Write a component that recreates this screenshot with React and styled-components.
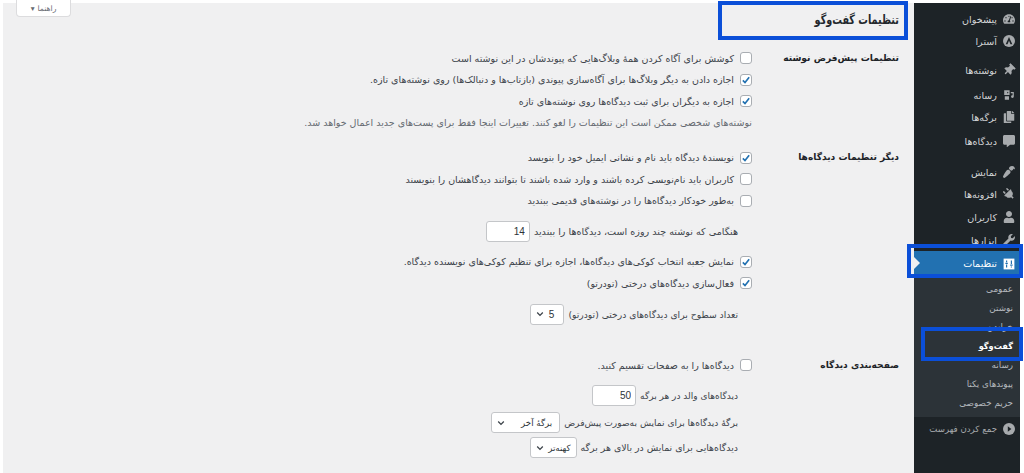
import React from "react";
import styled, { createGlobalStyle } from "styled-components";
import { FaTachometerAlt, FaThumbtack, FaCopy, FaCommentAlt, FaPaintBrush, FaPlug, FaUser, FaWrench } from "react-icons/fa";

const Global = createGlobalStyle`
  html, body { margin: 0; padding: 0; background: #fff; height: 473px; overflow: hidden; }
  #root { height: 473px; }
  * { box-sizing: border-box; }
`;
const FONT = `"DejaVu Sans", "Noto Sans", Tahoma, sans-serif`;

const Page = styled.div`
  display: flex; direction: rtl; height: 473px; padding: 3px 4px 0 3px;
  font-family: ${FONT}; font-size: 9.5px; color: #3c434a;
`;
const Sidebar = styled.nav`
  width: 106px; flex: none; background: #1d2327; display: flex; flex-direction: column;
`;
const MenuItem = styled.div`
  display: flex; align-items: center; gap: 6px; height: ${p => p.$h || 22}px; padding-right: 5px; flex: none;
  margin-top: ${p => p.$mt || 0}px;
  color: ${p => (p.$active ? "#fff" : p.$dim ? "#a7aaad" : "#d5d7d9")};
  font-size: ${p => (p.$dim ? 8.6 : 9.6)}px; white-space: nowrap;
  background: ${p => (p.$active ? "#2271b1" : "transparent")}; position: relative;
  svg { color: ${p => (p.$active ? "#fff" : "#a7aaad")}; flex: none; width: 12px; height: 12px; }
`;
const Notch = styled.span`
  position: absolute; left: 0; top: 6px; border: 6px solid transparent; border-left-color: #f0f0f1; border-right-width: 0;
`;
const Sub = styled.div`
  background: #2c3338; padding: 3.5px 0 4.5px; display: flex; flex-direction: column; flex: none;
`;
const SubItem = styled.div`
  height: 19px; line-height: 19px; padding-right: 7px; white-space: nowrap;
  font-size: ${p => (p.$current ? 8.2 : 8.8)}px;
  color: ${p => (p.$current ? "#fff" : "#b4b9be")}; font-weight: ${p => (p.$current ? 700 : 400)};
`;
const Pin = styled(FaThumbtack)`transform: rotate(45deg);`;
const Brush = styled(FaPaintBrush)`transform: rotate(180deg);`;
const Plug = styled(FaPlug)`transform: rotate(-45deg);`;

const Main = styled.main`
  flex: 1; background: #f0f0f1; padding: 0 15px 0 13px; min-width: 0; display: flex; flex-direction: column;
`;
const Head = styled.header`
  display: flex; justify-content: space-between; align-items: flex-start; height: 40px; flex: none;
`;
const Title = styled.h1`
  margin: 7px 0 0; font-size: 13px; font-weight: 700; color: #23282d; line-height: 20px;
  transform: scaleX(0.74); transform-origin: right center; white-space: nowrap;
`;
const Help = styled.button`
  margin: -3px 0 0; height: 17px; width: 55px; background: #fff; border: 1px solid #dcdcde; border-top: 0;
  border-radius: 0 0 4px 4px; font: 7.6px ${FONT}; color: #646970; display: flex; align-items: center;
  justify-content: center; gap: 3px; padding: 0;
`;
const Section = styled.section`
  display: grid; grid-template-columns: 147px 1fr; margin-top: ${p => p.$mt || 0}px;
`;
const Th = styled.h2`
  margin: 0; font-size: 9.1px; font-weight: 700; color: #1d2327; line-height: 21.5px; white-space: nowrap;
`;
const Fields = styled.div`display: flex; flex-direction: column;`;
const CheckLine = styled.label`
  display: flex; align-items: center; gap: 6px; height: 21.5px; white-space: nowrap;
  margin-top: ${p => p.$mt || 0}px;
`;
const FieldLine = styled.div`
  display: flex; align-items: center; gap: 4px; height: 21px; white-space: nowrap; font-size: ${p => p.$size || 9}px;
  padding-right: 14px; margin-top: ${p => p.$mt || 0}px;
`;
const Box = styled.span`
  width: 12px; height: 12px; flex: none; background: #fff; border: 1px solid #a9adb2; border-radius: 3px;
  display: flex; align-items: center; justify-content: center;
  svg { width: 10px; height: 10px; }
`;
const Note = styled.p`
  margin: 0; height: 21px; line-height: 21px; color: #646970; font-size: 9.5px; white-space: nowrap;
`;
const NumberBox = styled.input`
  width: 44px; height: 21px; border: 1px solid #c4c6c9; border-radius: 3px; background: #fff; color: #2c3338;
  font: 10px "Liberation Sans", sans-serif; direction: ltr; text-align: right; padding: 0 4px;
  margin: 0; outline: 0;
`;
const SelectBox = styled.div`
  width: ${p => p.$w}px; height: 21px; border: 1px solid #c4c6c9; border-radius: 3px; background: #fff; color: #2c3338;
  display: flex; align-items: center; justify-content: space-between; padding: 0 ${p => p.$pad || 7}px 0 5px; font-size: 8.6px;
  svg { width: 8px; height: 8px; flex: none; }
`;
const SelectNumber = styled.span`font: 10px "Liberation Sans", sans-serif;`;
const Mark = styled.div`
  position: absolute; border: 4.5px solid #0b4fd8; left: ${p => p.$x}px; top: ${p => p.$y}px;
  width: ${p => p.$w}px; height: ${p => p.$h}px; pointer-events: none;
`;

const Check = () => (
  <svg viewBox="0 0 12 12"><path d="M2.2 6.4 4.8 9 9.8 2.8" fill="none" stroke="#2271b1" strokeWidth="2" /></svg>
);
const Chevron = () => (
  <svg viewBox="0 0 10 10"><path d="M1.5 3.2 5 6.8 8.5 3.2" fill="none" stroke="#3c434a" strokeWidth="1.6" /></svg>
);
const CheckRow = ({ on, mt, children }) => (
  <CheckLine $mt={mt}><Box>{on && <Check />}</Box><span>{children}</span></CheckLine>
);
const Astra = () => (
  <svg viewBox="0 0 20 20"><circle cx="10" cy="10" r="10" fill="currentColor" /><path d="M10 3.5 4.5 15.5h3l2.5-6 2.5 6h3z" fill="#1d2327" /></svg>
);
const Media = () => (
  <svg viewBox="0 0 20 20" fill="currentColor"><path d="M2 2h9v8H2zM7 4.5v3l2.4-1.5zM13 5h5v7.5a2.3 2.3 0 1 1-2-2.2V7h-3zM3 12h7v6H3z" fillRule="evenodd" /></svg>
);
const Sliders = () => (
  <svg viewBox="0 0 20 20"><rect x="1" y="1" width="18" height="18" fill="#fff" /><path d="M6 4v3M6 11v5M14 4v6M14 14v2M4 9h4M12 12h4" stroke="#2271b1" strokeWidth="2" /></svg>
);
const Collapse = () => (
  <svg viewBox="0 0 20 20"><circle cx="10" cy="10" r="10" fill="currentColor" /><path d="M8 5.5 14 10l-6 4.5z" fill="#1d2327" /></svg>
);

export default function App() {
  return (
    <>
      <Global />
      <Page dir="rtl">
        <Sidebar>
          <MenuItem $mt={5}><FaTachometerAlt />پیشخوان</MenuItem>
          <MenuItem><Astra />آسترا</MenuItem>
          <MenuItem $mt={7}><Pin />نوشته‌ها</MenuItem>
          <MenuItem $mt={3}><Media />رسانه</MenuItem>
          <MenuItem><FaCopy />برگه‌ها</MenuItem>
          <MenuItem $mt={2}><FaCommentAlt />دیدگاه‌ها</MenuItem>
          <MenuItem $mt={9}><Brush />نمایش</MenuItem>
          <MenuItem><Plug />افزونه‌ها</MenuItem>
          <MenuItem $mt={1}><FaUser />کاربران</MenuItem>
          <MenuItem $mt={1}><FaWrench />ابزارها</MenuItem>
          <MenuItem $active $h={25}><Sliders />تنظیمات<Notch /></MenuItem>
          <Sub>
            <SubItem>عمومی</SubItem>
            <SubItem>نوشتن</SubItem>
            <SubItem>خواندن</SubItem>
            <SubItem $current>گفت‌وگو</SubItem>
            <SubItem>رسانه</SubItem>
            <SubItem>پیوندهای یکتا</SubItem>
            <SubItem>حریم خصوصی</SubItem>
          </Sub>
          <MenuItem $dim $h={24}><Collapse />جمع کردن فهرست</MenuItem>
        </Sidebar>
        <Main>
          <Head>
            <Title>تنظیمات گفت‌وگو</Title>
            <Help>راهنما <span>▾</span></Help>
          </Head>
          <Section $mt={4.5}>
            <Th>تنظیمات پیش‌فرض نوشته</Th>
            <Fields>
              <CheckRow>کوشش برای آگاه کردن همهٔ وبلاگ‌هایی که پیوندشان در این نوشته است</CheckRow>
              <CheckRow on>اجازه دادن به دیگر وبلاگ‌ها برای آگاه‌سازی پیوندی (بازتاب‌ها و دنبالک‌ها) روی نوشته‌های تازه.</CheckRow>
              <CheckRow on>اجازه به دیگران برای ثبت دیدگاه‌ها روی نوشته‌های تازه</CheckRow>
              <Note>نوشته‌های شخصی ممکن است این تنظیمات را لغو کنند. تغییرات اینجا فقط برای پست‌های جدید اعمال خواهد شد.</Note>
            </Fields>
          </Section>
          <Section $mt={14}>
            <Th>دیگر تنظیمات دیدگاه‌ها</Th>
            <Fields>
              <CheckRow on>نویسندهٔ دیدگاه باید نام و نشانی ایمیل خود را بنویسد</CheckRow>
              <CheckRow>کاربران باید نام‌نویسی کرده باشند و وارد شده باشند تا بتوانند دیدگاهشان را بنویسند</CheckRow>
              <CheckRow>به‌طور خودکار دیدگاه‌ها را در نوشته‌های قدیمی ببندید</CheckRow>
              <FieldLine $mt={9.5} $size={9.6}>هنگامی که نوشته چند روزه است، دیدگاه‌ها را ببندید <NumberBox readOnly value="14" /></FieldLine>
              <CheckRow on mt={9}>نمایش جعبه انتخاب کوکی‌های دیدگاه‌ها، اجازه برای تنظیم کوکی‌های نویسنده دیدگاه.</CheckRow>
              <CheckRow on>فعال‌سازی دیدگاه‌های درختی (تودرتو)</CheckRow>
              <FieldLine $mt={9.5} $size={9.2}>تعداد سطوح برای دیدگاه‌های درختی (تودرتو) <SelectBox $w={34} $pad={9}><SelectNumber>5</SelectNumber><Chevron /></SelectBox></FieldLine>
            </Fields>
          </Section>
          <Section $mt={30}>
            <Th>صفحه‌بندی دیدگاه</Th>
            <Fields>
              <CheckRow>دیدگاه‌ها را به صفحات تقسیم کنید.</CheckRow>
              <FieldLine $mt={9}>دیدگاه‌های والد در هر برگه <NumberBox readOnly value="50" /></FieldLine>
              <FieldLine $mt={6} $size={9.1}>برگهٔ دیدگاه‌ها برای نمایش به‌صورت پیش‌فرض <SelectBox $w={69}>برگهٔ آخر<Chevron /></SelectBox></FieldLine>
              <FieldLine $mt={4} $size={9.4}>دیدگاه‌هایی برای نمایش در بالای هر برگه <SelectBox $w={47} $pad={5}>کهنه‌تر<Chevron /></SelectBox></FieldLine>
            </Fields>
          </Section>
        </Main>
      </Page>
      <Mark $x={718} $y={1} $w={190} $h={39} />
      <Mark $x={907} $y={244} $w={116} $h={34} />
      <Mark $x={921} $y={327} $w={102} $h={34} />
    </>
  );
}
